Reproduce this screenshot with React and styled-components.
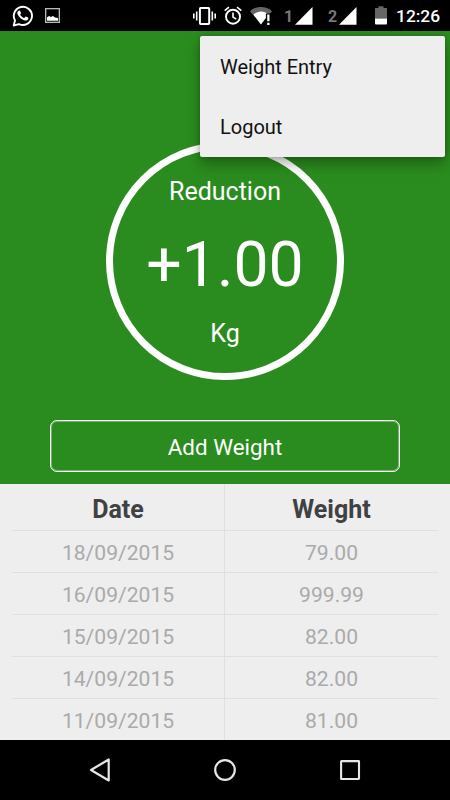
import styled, { createGlobalStyle } from "styled-components";

const entries = [
    { date: '18/09/2015', weight: '79.00' },
    { date: '16/09/2015', weight: '999.99' },
    { date: '15/09/2015', weight: '82.00' },
    { date: '14/09/2015', weight: '82.00' },
    { date: '11/09/2015', weight: '81.00' },
];

const WhatsappIcon = () => (
    <Icon width="22" height="22" viewBox="0 0 22 22" $left={12} $top={5}>
        <path d="M1.700 20.500l1.300-5.100A9.100 9.100 0 1 1 7 19.100z" fill="none" stroke="#fff" strokeWidth="1.900" strokeLinejoin="round" />
        <path fill="#fff" d="M8.100 6.100c-.3-.6-.5-.6-.8-.6-.8 0-2 .9-2 2.600 0 1 .6 2.100 1.300 3 1.300 1.800 2.900 3.200 5.200 4.100 2.200.9 3.900.1 4.300-.9.3-.7.3-1.300.2-1.500-.2-.2-2.300-1.300-2.600-1.300-.5 0-1 1.500-1.500 1.500-.6 0-3.800-2.200-4-3.600 0-.4 1-1 .9-1.500z" />
    </Icon>
)

const PictureIcon = () => (
    <Icon width="15" height="15" viewBox="0 0 15 15" $left={11} $top={8}>
        <rect x=".65" y=".65" width="13.700" height="13.700" fill="none" stroke="#bbb" strokeWidth="1.300" />
        <path d="M2 12.800V9.200l2.200-1.200 1.600 1.100L8 7.900l2 1.600 3 .4v2.900z" fill="#fff" />
    </Icon>
)

const VibrateIcon = () => (
    <Icon width="23" height="18" viewBox="0 0 23 18">
        <rect x="6.900" y="1" width="9.300" height="16" rx=".8" fill="none" stroke="#fff" strokeWidth="2" />
        <path d="M.8 6.500v5M3.700 4.500v9M19.300 4.500v9M22.200 6.500v5" stroke="#fff" strokeWidth="1.600" />
    </Icon>
)

const AlarmIcon = () => (
    <Icon width="18" height="19" viewBox="0 0 18 19" $left={8} $top={6}>
        <circle cx="9" cy="10.700" r="7" fill="none" stroke="#fff" strokeWidth="1.900" />
        <path d="M.7 4.600L5 1.100M17.300 4.600L13 1.100M9 6.500v4.600l3.300 2" fill="none" stroke="#fff" strokeWidth="1.600" />
    </Icon>
)

const WifiIcon = () => (
    <Icon width="22" height="18" viewBox="0 0 22 18" $left={8}>
        <path d="M0 4.200C6-1.400 16-1.400 22 4.200L19.600 7.500H15.500L4 8.200 2.500 7.200z" fill="#666" />
        <path d="M3.300 7.700c4.200-4.200 11-4.200 15.200 0L10.900 17.600z" fill="#fff" />
        <path d="M15.900 6.500H22V18h-6.100z" fill="#000" />
        <path d="M17.200 7.500h2.300v6.800h-2.300zM17.200 15.700h2.300V18h-2.300z" fill="#fff" />
    </Icon>
)

const SignalIcon = () => (
    <Icon width="18" height="18" viewBox="0 0 18 18">
        <path d="M17.500 0v17.700H0z" fill="#fff" />
    </Icon>
)

const BatteryIcon = () => (
    <Icon width="12" height="19" viewBox="0 0 12 19" $left={18} $top={6}>
        <path d="M0 2h3.500V.2h5V2H12v10.500H0z" fill="#666" />
        <path d="M0 12.500h12v5q0 1-1 1H1q-1 0-1-1z" fill="#fff" />
    </Icon>
)

const App = () => {
    return (
        <Screen>
            <GlobalStyle />

            <StatusBar>
                <WhatsappIcon />
                <PictureIcon />
                <Spacer />
                <VibrateIcon />
                <AlarmIcon />
                <WifiIcon />
                <Sim $left={12}>1</Sim>
                <SignalIcon />
                <Sim $left={15}>2</Sim>
                <SignalIcon />
                <BatteryIcon />
                <Clock>12:26</Clock>
            </StatusBar>

            <Summary>
                <Circle>
                    <Label>Reduction</Label>
                    <Value>+1.00</Value>
                    <Label>Kg</Label>
                </Circle>
                <AddButton>Add Weight</AddButton>
                <Menu>
                    <MenuItem>Weight Entry</MenuItem>
                    <MenuItem>Logout</MenuItem>
                </Menu>
            </Summary>

            <Table>
                <HeaderRow>
                    <Cell>Date</Cell>
                    <Cell>Weight</Cell>
                </HeaderRow>
                {entries.map(entry => (
                    <Row key={entry.date}>
                        <Cell>{entry.date}</Cell>
                        <Cell>{entry.weight}</Cell>
                    </Row>
                ))}
            </Table>

            <NavBar>
                <svg width="22" height="26" viewBox="0 0 22 26">
                    <path d="M19.700 2.500v21L2 13z" fill="none" stroke="#e6e6e6" strokeWidth="2.200" strokeLinejoin="round" />
                </svg>
                <svg width="22" height="22" viewBox="0 0 22 22">
                    <circle cx="11" cy="11" r="9.800" fill="none" stroke="#e6e6e6" strokeWidth="2.200" />
                </svg>
                <svg width="22" height="22" viewBox="0 0 22 22">
                    <rect x="2.100" y="2.100" width="17.900" height="17.900" rx=".4" fill="none" stroke="#e6e6e6" strokeWidth="2.100" />
                </svg>
            </NavBar>
        </Screen>
    )
}

const GlobalStyle = createGlobalStyle`
    * { box-sizing: border-box; }
    body {
        margin: 0;
        background: #000;
        font-family: Roboto, "Liberation Sans", sans-serif;
    }
`

const Screen = styled.div`
    display: flex;
    flex-direction: column;
    width: 450px;
    height: 800px;
    overflow: hidden;
`

const StatusBar = styled.div`
    display: flex;
    height: 31px;
    padding-right: 10px;
    background: #000;
`

const Icon = styled.svg`
    flex: none;
    margin-left: ${props => props.$left || 0}px;
    margin-top: ${props => props.$top || 7}px;
`

const Spacer = styled.div`
    flex: 1;
`

const Sim = styled.span`
    width: 11px;
    margin-left: ${props => props.$left}px;
    color: #777;
    font-size: 16px;
    font-weight: 700;
    line-height: 33px;
`

const Clock = styled.span`
    width: 44px;
    margin-left: 9px;
    color: #fff;
    font-size: 17.4px;
    font-weight: 500;
    line-height: 33px;
    white-space: nowrap;
`

const Summary = styled.div`
    position: relative;
    display: flex;
    flex-direction: column;
    align-items: center;
    height: 453px;
    padding-top: 111px;
    background: #2a8c1e;
    color: #fff;
`

const Circle = styled.div`
    display: flex;
    flex-direction: column;
    align-items: center;
    justify-content: space-between;
    width: 238px;
    height: 238px;
    padding: 25px 0 21px;
    border: 7px solid #fff;
    border-radius: 50%;
`

const Label = styled.div`
    font-size: 25px;
    line-height: 36px;
`

const Value = styled.div`
    padding-top: 3px;
    font-size: 62.5px;
    line-height: 74px;
`

const AddButton = styled.button`
    width: 350px;
    height: 52px;
    margin-top: 40px;
    padding: 2px 0 0;
    border: 1px solid #fff;
    border-radius: 7px;
    box-shadow: inset 0 0 0 1px rgba(255, 255, 255, 0.35);
    background: transparent;
    color: #fff;
    font-family: inherit;
    font-size: 22.4px;
`

const Menu = styled.div`
    position: absolute;
    top: 5px;
    right: 5px;
    width: 245px;
    height: 121px;
    padding-top: 1px;
    border-radius: 2px;
    background: #eee;
    box-shadow: 0 7px 14px rgba(0, 0, 0, 0.3), 0 0 4px rgba(0, 0, 0, 0.2);
`

const MenuItem = styled.div`
    padding-left: 20px;
    color: #111;
    font-size: 20px;
    line-height: 60px;
`

const Table = styled.div`
    height: 256px;
    padding: 0 12px;
    overflow: hidden;
    background: #eee;
`

const Row = styled.div`
    display: grid;
    grid-template-columns: 213px 213px;
    height: 42px;
    border-bottom: 1px solid #dfdfdf;
    color: #aaa;
    font-size: 21.1px;
    line-height: 44px;
    text-align: center;

    &:last-child {
        border-bottom: none;
    }
`

const HeaderRow = styled(Row)`
    height: 47px;
    color: #3f4142;
    font-size: 25px;
    font-weight: 700;
    line-height: 51px;
`

const Cell = styled.div`
    &:first-child {
        border-right: 1px solid #dfdfdf;
    }
`

const NavBar = styled.div`
    display: flex;
    align-items: center;
    justify-content: space-between;
    height: 60px;
    padding: 0 89px;
    background: #000;
`

export default App;
